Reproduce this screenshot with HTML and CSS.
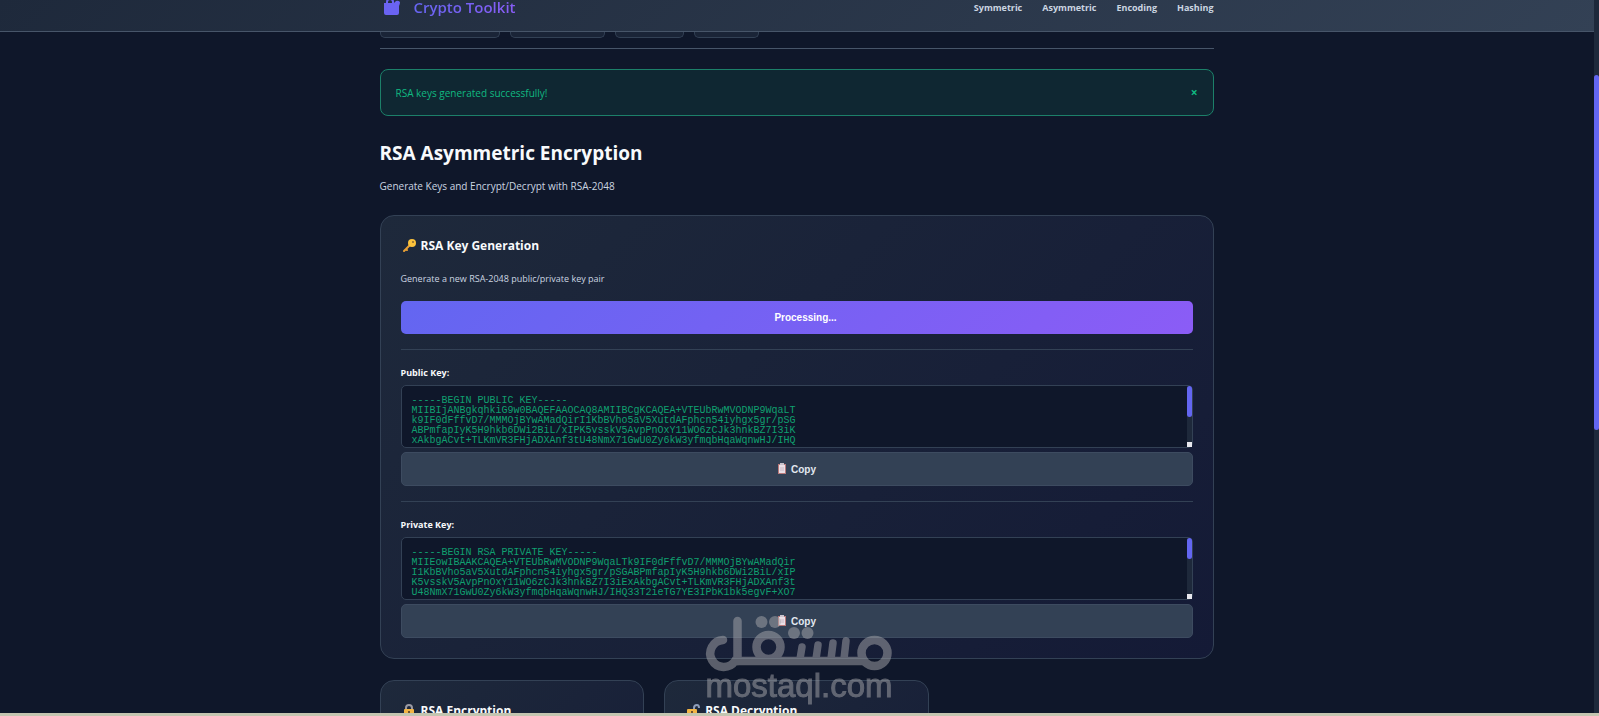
FILE: index.html
```html
<!DOCTYPE html>
<html lang="en">
<head>
  <meta charset="UTF-8" />
  <title>Crypto Toolkit</title>
  <meta name="viewport" content="width=device-width, initial-scale=1.0" />
  <link rel="stylesheet" href="styles.css">
</head>
<body>
  <header class="site-header">
    <div class="container header-row">
      <a href="#" class="brand">
        <svg class="brand-icon" viewBox="0 0 18 18" aria-hidden="true">
          <path d="M4 6 V4 Q4 1 7 1 Q10 1 10 4 V6" fill="none" stroke="#6a63f2" stroke-width="2"/>
          <path d="M1 5 H11 L13 3 Q15 2 17 4 Q17 6 16 8 V15 Q16 17 14 17 H3 Q1 17 1 15Z" fill="#6a63f2"/>
        </svg>
        <span>Crypto Toolkit</span>
      </a>
      <nav class="main-nav">
        <a href="#">Symmetric</a>
        <a href="#">Asymmetric</a>
        <a href="#">Encoding</a>
        <a href="#">Hashing</a>
      </nav>
    </div>
  </header>

  <main class="container">
    <div class="tabs">
      <button type="button" class="tab tab-xl" aria-label="Symmetric"></button>
      <button type="button" class="tab tab-lg" aria-label="Asymmetric"></button>
      <button type="button" class="tab tab-md" aria-label="Encoding"></button>
      <button type="button" class="tab tab-sm" aria-label="Hashing"></button>
    </div>

    <div class="alert">
      <span>RSA keys generated successfully!</span>
      <button type="button" class="alert-close">×</button>
    </div>

    <h1>RSA Asymmetric Encryption</h1>
    <p class="subtitle">Generate Keys and Encrypt/Decrypt with RSA-2048</p>

    <!-- Key generation -->
    <section class="card">
      <h2>
        <svg class="emoji" viewBox="0 0 16 16" aria-hidden="true">
          <path d="M9 7 L3 13 M5 11 L6 12" stroke="#e9a035" stroke-width="2" stroke-linecap="round"/>
          <circle cx="11" cy="5" r="4" fill="#fbc23c"/>
          <circle cx="12" cy="4" r="1" fill="#8a6a35"/>
        </svg>
        RSA Key Generation
      </h2>
      <p class="hint">Generate a new RSA-2048 public/private key pair</p>
      <button type="button" class="btn btn-primary">Processing...</button>

      <div class="key-block">
        <label for="publicKey">Public Key:</label>
        <div class="key-field">
          <textarea id="publicKey" readonly>-----BEGIN PUBLIC KEY-----
MIIBIjANBgkqhkiG9w0BAQEFAAOCAQ8AMIIBCgKCAQEA+VTEUbRwMVODNP9WqaLT
k9IF0dFffvD7/MMMOjBYwAMadQirI1KbBVho5aV5XutdAFphcn54iyhgx5gr/pSG
ABPmfapIyK5H9hkb6DWi2BiL/xIPK5vsskV5AvpPnOxY11WO6zCJk3hnkBZ7I3iK
xAkbgACvt+TLKmVR3FHjADXAnf3tU48NmX71GwU0Zy6kW3yfmqbHqaWqnwHJ/IHQ</textarea>
          <span class="scroll"><span class="thumb"></span><span class="grip"></span></span>
        </div>
        <button type="button" class="btn btn-copy">
          <svg class="clip" viewBox="0 0 10 12" aria-hidden="true">
            <rect x="1" y="1" width="8" height="10" fill="#b9797a"/>
            <rect x="2" y="2" width="6" height="8" fill="#eadfe6"/>
            <rect x="3" y="0" width="4" height="2" fill="#c9c3cc"/>
            <path d="M3 5h4M3 7h4" stroke="#c8b8c4"/>
          </svg>
          Copy
        </button>
      </div>

      <div class="key-block">
        <label for="privateKey">Private Key:</label>
        <div class="key-field">
          <textarea id="privateKey" readonly>-----BEGIN RSA PRIVATE KEY-----
MIIEowIBAAKCAQEA+VTEUbRwMVODNP9WqaLTk9IF0dFffvD7/MMMOjBYwAMadQir
I1KbBVho5aV5XutdAFphcn54iyhgx5gr/pSGABPmfapIyK5H9hkb6DWi2BiL/xIP
K5vsskV5AvpPnOxY11WO6zCJk3hnkBZ7I3iExAkbgACvt+TLKmVR3FHjADXAnf3t
U48NmX71GwU0Zy6kW3yfmqbHqaWqnwHJ/IHQ33T2ieTG7YE3IPbK1bk5egvF+XO7</textarea>
          <span class="scroll"><span class="thumb thumb-short"></span><span class="grip"></span></span>
        </div>
        <button type="button" class="btn btn-copy">
          <svg class="clip" viewBox="0 0 10 12" aria-hidden="true">
            <rect x="1" y="1" width="8" height="10" fill="#b9797a"/>
            <rect x="2" y="2" width="6" height="8" fill="#eadfe6"/>
            <rect x="3" y="0" width="4" height="2" fill="#c9c3cc"/>
            <path d="M3 5h4M3 7h4" stroke="#c8b8c4"/>
          </svg>
          Copy
        </button>
      </div>
    </section>

    <!-- Encrypt / decrypt -->
    <div class="card-grid">
      <section class="card">
        <h2>
          <svg class="emoji" viewBox="0 0 16 16" aria-hidden="true">
            <path d="M5 7 V5 Q5 2 8 2 Q11 2 11 5 V7" fill="none" stroke="#9b9aa3" stroke-width="2"/>
            <rect x="3" y="6" width="10" height="8" rx="1" fill="#f3b544"/>
            <rect x="7" y="8" width="2" height="4" fill="#6f5330"/>
          </svg>
          RSA Encryption
        </h2>
      </section>
      <section class="card">
        <h2>
          <svg class="emoji" viewBox="0 0 16 16" aria-hidden="true">
            <path d="M9 7 V5 Q9 2 12 2 Q14 2 14 5" fill="none" stroke="#8d9cb8" stroke-width="2"/>
            <rect x="2" y="6" width="10" height="8" rx="1" fill="#f3b544"/>
            <rect x="6" y="8" width="2" height="4" fill="#6f5330"/>
          </svg>
          RSA Decryption
        </h2>
      </section>
    </div>
  </main>

  <div class="page-scroll"><div class="page-thumb"></div></div>

  <div class="watermark">
    <svg viewBox="0 0 186 56" role="img" aria-label="Mostaql">
      <g fill="none" stroke="#a8a8ac" stroke-width="8.500" stroke-linecap="round">
        <path d="M17 24 A13.500 13.500 0 1 0 29 45 H158"/>
        <path d="M31.500 5 V45"/>
        <circle cx="62.500" cy="31" r="12"/>
        <circle cx="168.500" cy="37" r="13"/>
        <path d="M96 31 L94 43 M112 29 L110 43 M127 27 L125 43 M140 25 L138 43" stroke-width="7.500"/>
      </g>
      <g fill="#a8a8ac">
        <circle cx="55.500" cy="6" r="6"/>
        <circle cx="69" cy="6" r="6"/>
        <circle cx="88" cy="17" r="6"/>
        <circle cx="101.500" cy="17" r="6"/>
      </g>
    </svg>
    <span>mostaql.com</span>
  </div>
  <div class="bottom-strip"></div>
</body>
</html>
```
FILE: styles.css
```css
* {
  box-sizing: border-box;
}
body {
  margin: 0;
  height: 100vh;
  overflow: hidden;
  background: #0f172a;
  color: #f8fafc;
  font-family: "Open Sans", "Noto Sans", sans-serif;
  font-size: 10px;
}
h1, h2, p {
  margin: 0;
}
button {
  font-family: inherit;
  cursor: pointer;
}
.container {
  width: 53%;
  max-width: 834px;
  min-width: 320px;
  margin: 0 auto;
  position: relative;
  right: 3px;
}

/* Header */
.site-header {
  background: linear-gradient(135deg, #1e293b, #334155);
  border-bottom: 1px solid #475569;
}
.header-row {
  display: flex;
  justify-content: space-between;
  align-items: center;
  height: 31px;
  padding-bottom: 17px;
}
.brand {
  display: flex;
  align-items: center;
  gap: 13px;
  padding-left: 3px;
  font-size: 15px;
  font-weight: 600;
  text-decoration: none;
}
.brand span {
  background: linear-gradient(135deg, #6366f1, #8b5cf6);
  -webkit-background-clip: text;
  background-clip: text;
  color: transparent;
}
.brand-icon {
  width: 18px;
  height: 18px;
}
.main-nav {
  display: flex;
  gap: 20px;
}
.main-nav a {
  color: #cbd5e1;
  font-size: 9px;
  font-weight: bold;
  text-decoration: none;
}

/* Tabs */
.tabs {
  display: flex;
  gap: 10px;
  height: 17px;
  margin-bottom: 20px;
  border-bottom: 1px solid #475569;
}
.tab {
  height: 6px;
  padding: 0;
  background: #1a2437;
  border: 1px solid #334155;
  border-top: none;
  border-radius: 0 0 5px 5px;
}
.tab-xl { width: 120px; }
.tab-lg { width: 95px; }
.tab-md { width: 69px; }
.tab-sm { width: 65px; }

/* Alert */
.alert {
  display: flex;
  justify-content: space-between;
  align-items: center;
  height: 47px;
  padding: 0 15px;
  margin-bottom: 23px;
  background: rgba(16, 185, 129, 0.1);
  border: 1px solid #1c8069;
  border-radius: 8px;
  color: #10b981;
}
.alert-close {
  padding: 0;
  background: none;
  border: none;
  color: inherit;
  font-size: 12px;
  font-weight: bold;
}

h1 {
  margin-bottom: 11px;
  font-size: 19px;
  line-height: 28px;
}
.subtitle {
  margin-bottom: 21px;
  color: #cbd5e1;
  font-size: 10px;
  line-height: 16px;
}

/* Cards */
.card {
  padding: 20px;
  background: linear-gradient(135deg, #1e293b, #141a36);
  border: 1px solid #334155;
  border-radius: 14px;
}
.card h2 {
  display: flex;
  align-items: center;
  gap: 4px;
  margin-bottom: 16px;
  font-size: 12px;
  line-height: 20px;
}
.emoji {
  width: 16px;
  height: 16px;
}
.hint {
  margin-bottom: 15px;
  color: #cbd5e1;
  font-size: 9px;
  line-height: 14px;
}
.btn {
  display: flex;
  align-items: center;
  justify-content: center;
  gap: 4px;
  width: 100%;
  height: 34px;
  border: none;
  border-radius: 5px;
  font-family: "Liberation Sans", Arial, sans-serif;
  font-size: 10px;
  font-weight: bold;
}
.btn-primary {
  height: 33px;
  padding-left: 24px;
  background: linear-gradient(135deg, #6366f1, #8b5cf6);
  color: #fff;
}
.btn-copy {
  background: #334155;
  border: 1px solid #3d4b60;
  color: #e2e8f0;
}
.clip {
  width: 10px;
  height: 12px;
}
.key-block {
  margin-top: 15px;
  padding-top: 15px;
  border-top: 1px solid #334155;
}
.key-block label {
  display: block;
  margin-bottom: 5px;
  font-size: 9px;
  font-weight: bold;
  line-height: 15px;
}
.key-field {
  position: relative;
  margin-bottom: 4px;
}
.key-field textarea {
  display: block;
  width: 100%;
  height: 63px;
  padding: 10px;
  background: #0f172a;
  border: 1px solid #334155;
  border-radius: 5px;
  color: #10a070;
  font-family: "Liberation Mono", "Courier New", monospace;
  font-size: 10px;
  line-height: 10px;
  resize: none;
  overflow: hidden;
}
.scroll {
  position: absolute;
  top: 1px;
  right: 1px;
  bottom: 1px;
  width: 5px;
  background: #1e293b;
}
.thumb {
  display: block;
  height: 31px;
  background: #6366f1;
  border-radius: 3px;
}
.thumb-short {
  height: 21px;
}
.grip {
  position: absolute;
  right: 0;
  bottom: 0;
  width: 5px;
  height: 5px;
  background: #e8e8ee;
}
.card-grid {
  display: grid;
  grid-template-columns: repeat(3, 1fr);
  gap: 20px;
  margin-top: 21px;
}
.card-grid .card {
  min-height: 280px;
}

/* Overlays */
.page-scroll {
  position: fixed;
  top: 0;
  right: 0;
  bottom: 0;
  width: 5px;
  padding-top: 75px;
  background: #1e293b;
}
.page-thumb {
  height: 355px;
  background: #6366f1;
  border-radius: 3px;
}
.watermark {
  position: fixed;
  left: 50%;
  bottom: 16px;
  width: 186px;
  margin-left: -94px;
  opacity: 0.5;
  color: #a8a8ac;
  font-family: "Liberation Sans", Arial, sans-serif;
  font-size: 33px;
  line-height: 28px;
  pointer-events: none;
}
.watermark svg {
  display: block;
  width: 186px;
  height: 56px;
  overflow: visible;
}
.watermark span {
  -webkit-text-stroke: 1px #a8a8ac;
}
.bottom-strip {
  position: fixed;
  left: 0;
  right: 0;
  bottom: 0;
  height: 3px;
  background: #c3c5b0;
}
```
